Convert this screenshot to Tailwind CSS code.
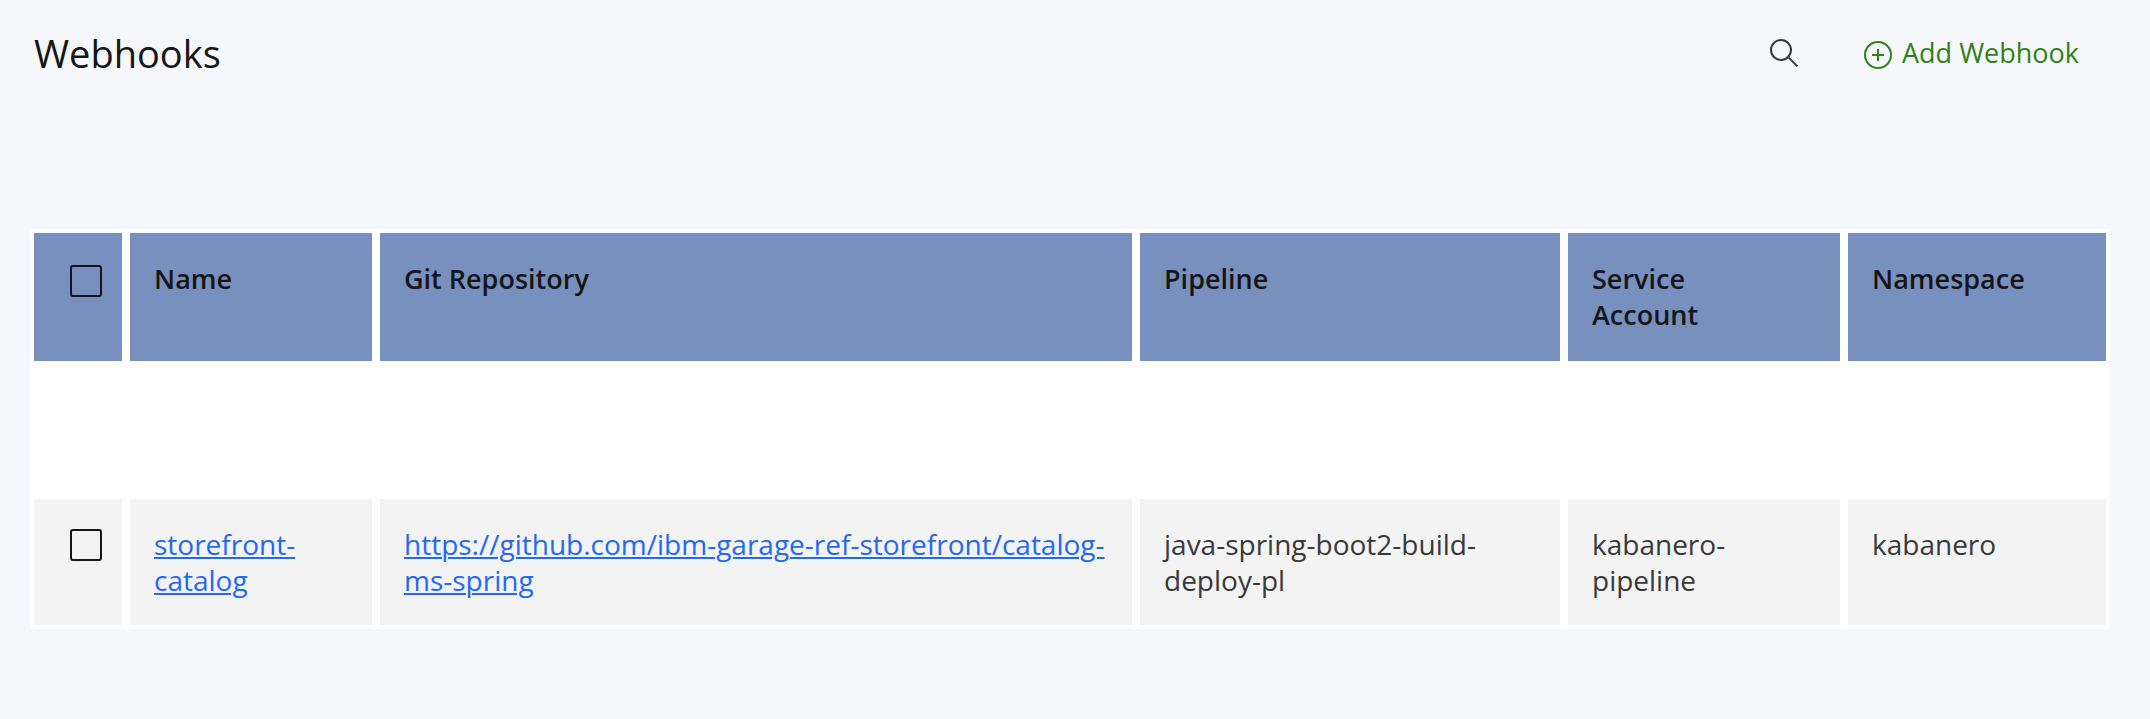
<!DOCTYPE html>
<html lang="en">
<head>
<meta charset="utf-8">
<meta name="viewport" content="width=device-width, initial-scale=1">
<title>Webhooks</title>
<script src="https://cdn.jsdelivr.net/npm/@tailwindcss/browser@4"></script>
</head>
<body class="min-h-screen bg-[#f5f7fb] font-['Open_Sans','Noto_Sans',sans-serif] text-[#161616]">
  <header class="flex items-center justify-between pt-[29px] pr-[71px] pl-[34px]">
    <h1 class="text-[38px] leading-12 font-normal">Webhooks</h1>
    <div class="flex items-center gap-[62px]">
      <button type="button" aria-label="Search" class="text-[#393939]">
        <svg class="size-8" viewBox="0 0 16 16" fill="none" stroke="currentColor" aria-hidden="true">
          <circle cx="6.5" cy="6.5" r="5"/>
          <path d="M10.3 10.3l4.4 4.4"/>
        </svg>
      </button>
      <button type="button" class="flex items-end gap-2 text-[27px] leading-9 text-[#31801c]">
        <svg class="size-8" viewBox="0 0 16 16" fill="none" stroke="currentColor" aria-hidden="true">
          <circle cx="8" cy="8" r="6.5"/>
          <path d="M8 5v6M5 8h6"/>
        </svg>
        <span>Add Webhook</span>
      </button>
    </div>
  </header>

  <main class="mt-38 mr-10 ml-[30px]">
    <table class="w-full table-fixed border-separate border-spacing-0 bg-white">
      <colgroup>
        <col class="w-24"><col class="w-[250px]"><col><col class="w-[428px]"><col class="w-[280px]"><col class="w-[266px]">
      </colgroup>
      <thead class="text-left align-top text-[27px] leading-9">
        <tr>
          <th class="border-4 border-white bg-[#7890bd] bg-clip-padding pt-8 pl-9 align-top">
            <input type="checkbox" aria-label="Select all webhooks" class="block size-8 appearance-none rounded-[3px] border-2 border-[#161616] checked:bg-[#161616]">
          </th>
          <th scope="col" class="border-4 border-white bg-[#7890bd] bg-clip-padding px-6 py-7 align-top font-semibold">Name</th>
          <th scope="col" class="border-4 border-white bg-[#7890bd] bg-clip-padding px-6 py-7 align-top font-semibold">Git Repository</th>
          <th scope="col" class="border-4 border-white bg-[#7890bd] bg-clip-padding px-6 py-7 align-top font-semibold">Pipeline</th>
          <th scope="col" class="border-4 border-white bg-[#7890bd] bg-clip-padding px-6 py-7 align-top font-semibold">Service<br>Account</th>
          <th scope="col" class="border-4 border-white bg-[#7890bd] bg-clip-padding px-6 py-7 align-top font-semibold">Namespace</th>
        </tr>
      </thead>
      <tbody class="text-[28px] leading-9 text-[#393939]">
        <tr aria-hidden="true"><td colspan="6" class="h-[130px]"></td></tr>
        <tr>
          <td class="border-4 border-white bg-[#f3f3f3] bg-clip-padding pt-[30px] pl-9 align-top">
            <input type="checkbox" aria-label="Select storefront-catalog" class="block size-8 appearance-none rounded-[3px] border-2 border-[#161616] checked:bg-[#161616]">
          </td>
          <td class="border-4 border-white bg-[#f3f3f3] bg-clip-padding px-6 py-[27px] align-top"><a href="#storefront-catalog" class="text-[#2468f6] underline decoration-2 underline-offset-2">storefront-<wbr>catalog</a></td>
          <td class="border-4 border-white bg-[#f3f3f3] bg-clip-padding px-6 py-[27px] align-top"><a href="https://github.com/ibm-garage-ref-storefront/catalog-ms-spring" class="text-[#2468f6] underline decoration-2 underline-offset-2">https://github.com/ibm-garage-ref-storefront/catalog-<wbr>ms-spring</a></td>
          <td class="border-4 border-white bg-[#f3f3f3] bg-clip-padding px-6 py-[27px] align-top">java-spring-boot2-build-<wbr>deploy-pl</td>
          <td class="border-4 border-white bg-[#f3f3f3] bg-clip-padding px-6 py-[27px] align-top">kabanero-<wbr>pipeline</td>
          <td class="border-4 border-white bg-[#f3f3f3] bg-clip-padding px-6 py-[27px] align-top">kabanero</td>
        </tr>
      </tbody>
    </table>
  </main>
</body>
</html>
